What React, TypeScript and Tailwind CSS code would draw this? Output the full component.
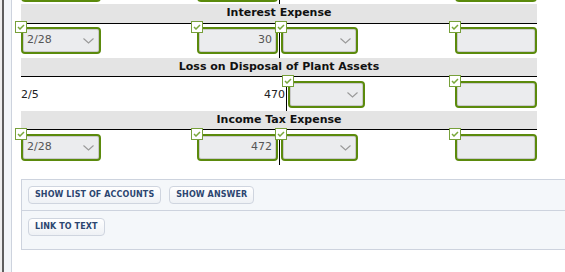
import React from 'react';

const Check = () => (
  <span className="absolute -left-[6px] -top-[6px] z-10 flex h-[12px] w-[12px] items-center justify-center border border-[#77a03a] bg-white">
    <svg width="8" height="6" viewBox="0 0 8 6">
      <path d="M1 3 L3 5 L7 1" fill="none" stroke="#79a83a" strokeWidth="1.5" />
    </svg>
  </span>
);

const Field = ({ w, value, select, checked = true }: { w: string; value?: string; select?: boolean; checked?: boolean }) => (
  <div className={`relative h-[27px] ${w}`}>
    {checked && <Check />}
    <div className="flex h-full w-full items-center rounded-[4px] border-2 border-[#5b8a0c] bg-[#ebecee] px-[4px] text-[11px] text-[#555] shadow-[inset_0_0_0_1px_#c9c9c9]">
      {select ? (
        <>
          <span className="flex-1">{value}</span>
          <svg width="11" height="6" viewBox="0 0 11 6" className="mr-px">
            <path d="M0.5 0.5 L5.5 5 L10.5 0.5" fill="none" stroke="#999" strokeWidth="1.1" />
          </svg>
        </>
      ) : (
        <span className="flex-1 text-right">{value}</span>
      )}
    </div>
  </div>
);

const Header = ({ title, h }: { title: string; h: string }) => (
  <div className={`${h} border-b border-black bg-[#e4e4e4] text-center text-[11px] font-bold leading-[18px] text-[#111]`}>{title}</div>
);

const EntryRow = ({ date, amount, h, mt }: { date: string; amount: string; h: string; mt: string }) => (
  <div className={`flex ${h}`}>
    <div className={`w-[176px] ${mt}`}>
      <Field w="w-[80px]" value={date} select />
    </div>
    <div className={`w-[83px] border-r border-black ${mt}`}>
      <Field w="w-[81px]" value={amount} />
    </div>
    <div className={`w-[175px] pl-px ${mt}`}>
      <Field w="w-[77px]" select />
    </div>
    <div className={`w-[82px] ${mt}`}>
      <Field w="w-[82px]" />
    </div>
  </div>
);

const Button = ({ label }: { label: string }) => (
  <button className="h-[18px] rounded-[4px] border border-[#cfd5df] bg-gradient-to-b from-white to-[#eef1f5] px-[6px] text-[8px] font-bold tracking-[0.1px] text-[#2c4670]">
    {label}
  </button>
);

export default function App() {
  return (
    <div className="flex h-[272px] w-[565px] overflow-hidden bg-white font-['DejaVu_Sans',Verdana,sans-serif]">
      <div className="w-[2px] shrink-0 bg-[#eeeeee]" />
      <div className="w-[2px] shrink-0 bg-[#5e5e5e]" />
      <div className="w-[7px] shrink-0 bg-[#f3f6f9]" />
      <div className="w-px shrink-0 bg-[#cdd3de]" />
      <div className="flex min-w-0 flex-1 flex-col pl-[9px]">
        <div className="w-[516px] shrink-0">
          <div className="h-[4px] overflow-hidden">
            <div className="-mt-[25px] flex h-[29px]">
              <div className="w-[176px]">
                <Field w="w-[80px]" value="" select checked={false} />
              </div>
              <div className="w-[83px] border-r border-black">
                <Field w="w-[81px]" checked={false} />
              </div>
              <div className="w-[175px]" />
              <div className="w-[82px]">
                <Field w="w-[82px]" checked={false} />
              </div>
            </div>
          </div>
          <Header title="Interest Expense" h="h-[20px]" />
          <EntryRow date="2/28" amount="30" h="h-[34px]" mt="pt-[3px]" />
          <Header title="Loss on Disposal of Plant Assets" h="h-[19px]" />
          <div className="flex h-[34px]">
            <div className="w-[176px] pt-[10px] text-[11px] text-[#222]">2/5</div>
            <div className="w-[90px] border-r border-black pr-px pt-[10px] text-right text-[11px] text-[#222]">470</div>
            <div className="w-[168px] pl-px pt-[4px]">
              <Field w="w-[77px]" select />
            </div>
            <div className="w-[82px] pt-[4px]">
              <Field w="w-[82px]" />
            </div>
          </div>
          <Header title="Income Tax Expense" h="h-[19px]" />
          <EntryRow date="2/28" amount="472" h="h-[35px]" mt="pt-[4px]" />
        </div>
        <div className="mt-[14px] w-[560px] shrink-0 border border-[#cdd3de] bg-[#f4f7fa]">
          <div className="flex gap-[8px] border-b border-[#cdd3de] px-[6px] py-[6px]">
            <Button label="SHOW LIST OF ACCOUNTS" />
            <Button label="SHOW ANSWER" />
          </div>
          <div className="flex px-[6px] pb-[13px] pt-[7px]">
            <Button label="LINK TO TEXT" />
          </div>
        </div>
      </div>
    </div>
  );
}
